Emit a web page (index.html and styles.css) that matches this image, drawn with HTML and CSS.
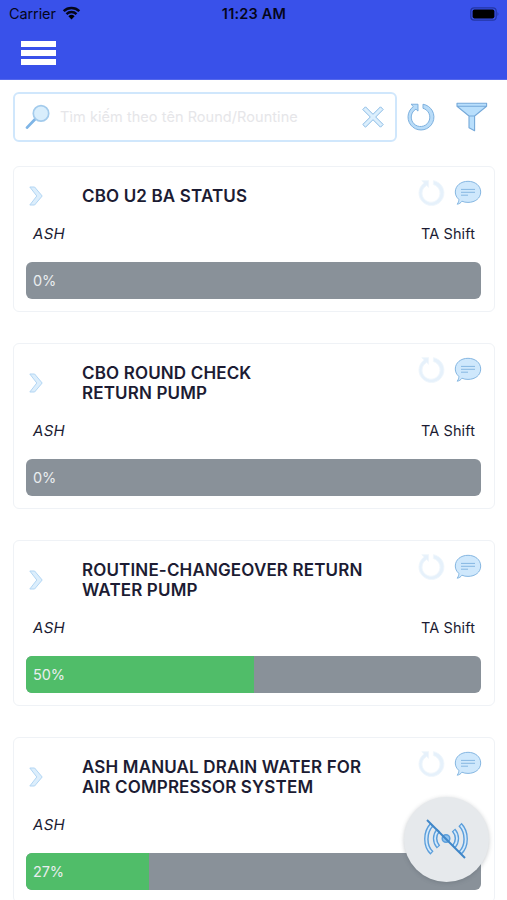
FILE: index.html
```html
<!DOCTYPE html>
<html lang="vi">
<head>
<meta charset="utf-8">
<meta name="viewport" content="width=device-width, initial-scale=1">
<title>Rounds</title>
<link rel="stylesheet" href="styles.css">
</head>
<body>
<svg class="defs" aria-hidden="true">
  <symbol id="reload" viewBox="0 0 30 30">
    <path d="M5.2 1.8 H12.4 V8.9 L10.3 6.9 A9.6 9.6 0 1 0 17.6 6 V1.8 A13.4 13.4 0 1 1 7.6 4.2 Z"/>
  </symbol>
  <symbol id="chevron" viewBox="0 0 14 20">
    <path d="M.8 1 H5.6 L13.2 10 L5.6 19 H.8 L7.8 10 Z"/>
  </symbol>
  <symbol id="chat" viewBox="0 0 28 26">
    <path d="M14 1.3 C21.2 1.3 26.7 5.8 26.7 12 C26.7 18.2 21.2 22.4 14 22.4 C11.8 22.4 9.7 22 7.9 21.2 C6.8 22.9 5.2 23.9 3.2 24.2 C4.4 22.6 4.9 21 4.8 19.3 C2.6 17.5 1.3 14.9 1.3 12 C1.3 5.8 6.8 1.3 14 1.3 Z"/>
    <path d="M7 9.4 H21 M7 12.3 H21 M7 15.2 H14" fill="none"/>
  </symbol>
</svg>

<header class="header">
  <div class="status">
    <div class="carrier">Carrier
      <svg class="wifi" viewBox="0 0 18 14"><path d="M1.2 5.2 A11.3 11.3 0 0 1 16.8 5.2 M4 8.1 A7.3 7.3 0 0 1 14 8.1" fill="none" stroke="#05061a" stroke-width="2.5"/><path d="M9 13.4 L5.9 10.3 A4.5 4.5 0 0 1 12.1 10.3 Z"/></svg>
    </div>
    <div class="clock">11:23 AM</div>
    <svg class="battery" viewBox="0 0 30 14"><rect x=".8" y=".8" width="25.4" height="12.4" rx="3.4" fill="none" stroke="#2336a4" stroke-width="1.2"/><rect x="2.6" y="2.6" width="21.8" height="8.8" rx="1.8"/><path d="M27.5 5 Q29.4 7 27.5 9 Z" fill="#2336a4"/></svg>
  </div>
  <div class="menu"><span></span><span></span><span></span></div>
</header>

<div class="tools">
  <div class="search">
    <svg class="glass" viewBox="0 0 26 26"><path d="M10.5 14.8 L2 23.6" stroke="#7fb5e6" stroke-width="2.8" stroke-linecap="round"/><circle cx="16" cy="9.4" r="7.7" fill="#d9eefc" stroke="#a3cbec" stroke-width="1.7"/></svg>
    <span class="placeholder">Tìm kiếm theo tên Round/Rountine</span>
    <svg class="clear" viewBox="0 0 22 22"><path d="M3.5 .8 L11 8.3 L18.5 .8 L21.2 3.5 L13.7 11 L21.2 18.5 L18.5 21.2 L11 13.7 L3.5 21.2 L.8 18.5 L8.3 11 L.8 3.5 Z" fill="#dceffd" stroke="#8bbbe5" stroke-linejoin="round"/></svg>
  </div>
  <svg class="refresh"><use href="#reload"/></svg>
  <svg class="filter" viewBox="0 0 32 30"><path d="M1 1.2 H30.6 V4.3 L18.6 14 V28.8 L13 25.8 V14 L1 4.3 Z M1 4.3 H30.6 M13 14 H18.6" fill="#b9dffc" stroke="#76a9d9" stroke-width="1.1" stroke-linejoin="round"/></svg>
</div>

<main class="list">
  <article class="card">
    <div class="head">
      <svg class="chevron"><use href="#chevron"/></svg>
      <h2>CBO U2 BA STATUS</h2>
      <div class="actions"><svg class="sync"><use href="#reload"/></svg><svg class="chat"><use href="#chat"/></svg></div>
    </div>
    <div class="meta"><em>ASH</em><span>TA Shift</span></div>
    <div class="bar"><div class="fill" style="width:0%"></div><span>0%</span></div>
  </article>
  <article class="card">
    <div class="head">
      <svg class="chevron"><use href="#chevron"/></svg>
      <h2>CBO ROUND CHECK<br>RETURN PUMP</h2>
      <div class="actions"><svg class="sync"><use href="#reload"/></svg><svg class="chat"><use href="#chat"/></svg></div>
    </div>
    <div class="meta"><em>ASH</em><span>TA Shift</span></div>
    <div class="bar"><div class="fill" style="width:0%"></div><span>0%</span></div>
  </article>
  <article class="card">
    <div class="head">
      <svg class="chevron"><use href="#chevron"/></svg>
      <h2>ROUTINE-CHANGEOVER RETURN<br>WATER PUMP</h2>
      <div class="actions"><svg class="sync"><use href="#reload"/></svg><svg class="chat"><use href="#chat"/></svg></div>
    </div>
    <div class="meta"><em>ASH</em><span>TA Shift</span></div>
    <div class="bar"><div class="fill" style="width:50.2%"></div><span>50%</span></div>
  </article>
  <article class="card">
    <div class="head">
      <svg class="chevron"><use href="#chevron"/></svg>
      <h2>ASH MANUAL DRAIN WATER FOR<br>AIR COMPRESSOR SYSTEM</h2>
      <div class="actions"><svg class="sync"><use href="#reload"/></svg><svg class="chat"><use href="#chat"/></svg></div>
    </div>
    <div class="meta"><em>ASH</em></div>
    <div class="bar"><div class="fill" style="width:27.1%"></div><span>27%</span></div>
  </article>
</main>

<div class="fab">
  <svg viewBox="0 0 46 42">
    <g fill="none" stroke="#5b9edb" stroke-width="4.6"><path d="M9 6.5 C1.5 14 1.5 28 9 35 M15.5 12 C11 17 11 24 15.5 29 M30.5 12 C35 17 35 24 30.5 29 M37 6.5 C44.5 14 44.5 28 37 35"/></g>
    <g fill="none" stroke="#d3e9fb" stroke-width="1.8"><path d="M8.2 7.4 C1.7 15 1.7 27.5 8.2 34.1 M14.8 12.9 C11.1 17.3 11.1 23.7 14.8 28.1 M31.2 12.9 C34.9 17.3 34.9 23.7 31.2 28.1 M37.8 7.4 C44.3 15 44.3 27.5 37.8 34.1"/></g>
    <circle cx="23" cy="20.5" r="3.8" fill="#8fc3ef" stroke="#5b9edb" stroke-width="1.5"/>
    <path d="M4 2 L42 40" stroke="#3f86c8" stroke-width="2"/>
  </svg>
</div>
</body>
</html>
```
FILE: styles.css
```css
* { box-sizing: border-box; }
body {
  margin: 0;
  height: 900px;
  overflow: hidden;
  background: #fff;
  color: #1c1c33;
  font-family: Inter, "Liberation Sans", sans-serif;
}
svg { display: block; flex: none; }
.defs { width: 0; height: 0; position: absolute; }

.header { height: 80px; background: #3951ea; border-bottom: 1px solid #5568ec; }
.status {
  display: grid;
  grid-template-columns: 1fr auto 1fr;
  align-items: center;
  height: 27px;
  padding: 0 7px 0 9px;
  color: #05061a;
  font-size: 14.5px;
}
.carrier { display: flex; align-items: center; gap: 6px; letter-spacing: -.1px; }
.wifi { width: 19px; height: 14px; margin-top: -1px; }
.clock { margin-right: 1px; font-weight: 600; letter-spacing: .2px; }
.battery { width: 30px; height: 14px; justify-self: end; }
.menu { display: flex; flex-direction: column; gap: 3px; width: 35px; margin: 14px 0 0 21px; }
.menu span { height: 6px; background: #fff; }

.tools { display: flex; align-items: center; padding: 12px 0 0 13px; }
.search {
  display: flex;
  align-items: center;
  width: 384px;
  height: 50px;
  padding: 0 11px 0 10px;
  border: 2px solid #d0e7fc;
  border-radius: 6px;
}
.glass { width: 26px; height: 26px; }
.placeholder { flex: 1; margin: -1px 0 0 9px; color: #e6e6e9; font-size: 14.5px; letter-spacing: .06px; white-space: nowrap; }
.clear { width: 22px; height: 22px; }
.refresh { width: 29px; height: 30px; margin-left: 9px; fill: #b9dcf8; stroke: #7aaedd; }
.filter { width: 32px; height: 30px; margin-left: 21px; }

.list { display: flex; flex-direction: column; gap: 31px; padding: 24px 12px 0 13px; }
.card {
  flex: none;
  padding: 14px 13px 12px;
  border: 1px solid #eff2f6;
  border-radius: 6px;
}
.head { display: flex; align-items: center; padding: 5px 0 0 2px; }
.chevron { width: 14px; height: 20px; fill: #dceefc; stroke: #b2d5f3; }
h2 { flex: 1; margin: 0 0 0 39px; font-size: 17px; font-weight: 600; line-height: 20.25px; letter-spacing: .15px; white-space: nowrap; }
.actions { display: flex; align-items: center; align-self: flex-start; gap: 9px; height: 25px; margin: -5.5px -1px -20px 0; }
.sync { width: 28px; height: 28px; fill: #e6f1fb; stroke: #f0f6fc; }
.chat { width: 28px; height: 26px; fill: #cfe8fc; stroke: #86b7e2; }
.meta {
  display: flex;
  justify-content: space-between;
  height: 18px;
  margin: 19px 6px 0;
  font-size: 14.5px;
  line-height: 18px;
  letter-spacing: .1px;
}
.meta em { font-size: 15px; letter-spacing: .3px; }
.bar {
  position: relative;
  display: flex;
  align-items: center;
  height: 36.5px;
  margin: 19px 0 0 -1px;
  overflow: hidden;
  border-radius: 6px;
  background: #899199;
}
.fill { position: absolute; inset: 0 auto 0 0; background: #50bd69; }
.bar span { position: relative; padding-left: 7px; color: #e9edef; font-size: 14.5px; letter-spacing: -.1px; }

.fab {
  position: absolute;
  left: 403.5px;
  top: 796.5px;
  display: grid;
  place-items: center;
  width: 85px;
  height: 85px;
  border-radius: 50%;
  background: #e6e9ec;
  box-shadow: 0 1px 4px rgba(70, 80, 90, .3);
}
.fab svg { width: 46px; height: 42px; }
```
